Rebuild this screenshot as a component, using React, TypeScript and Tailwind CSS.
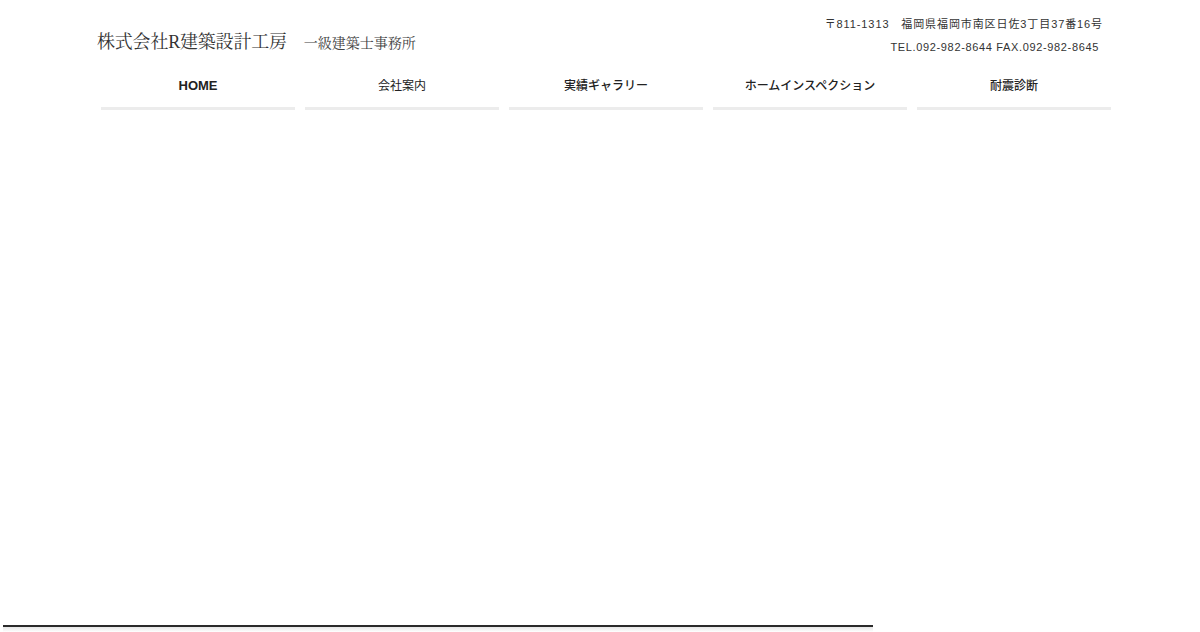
const navItems = [
  { label: "HOME", weight: "font-bold text-[13px]" },
  { label: "会社案内", weight: "font-normal text-[12px]" },
  { label: "実績ギャラリー", weight: "font-medium text-[12px]" },
  { label: "ホームインスペクション", weight: "font-medium text-[12px]" },
  { label: "耐震診断", weight: "font-medium text-[12px]" },
];

export default function App() {
  return (
    <div
      className="relative w-[1200px] h-[632px] bg-white overflow-hidden text-[#333]"
      style={{ fontFamily: '"Liberation Sans", Arial, "Noto Sans CJK JP", sans-serif' }}
    >
      <header className="w-[1020px] ml-[97px]">
        <div className="flex justify-between items-start">
          <div className="flex items-end mt-[30px] gap-[17px]">
            <h1
              className="text-[18px] leading-[24px] tracking-[-0.2px] text-[#333]"
              style={{ fontFamily: '"Liberation Serif", "Noto Serif CJK JP", "Noto Sans CJK JP", serif' }}
            >
              株式会社R建築設計工房
            </h1>
            <span
              className="text-[14px] leading-[20px] tracking-[0px] text-[#444]"
              style={{ fontFamily: '"Liberation Serif", "Noto Serif CJK JP", "Noto Sans CJK JP", serif' }}
            >
              一級建築士事務所
            </span>
          </div>
          <div className="text-right text-[11px] leading-[23px] mt-[13px] mr-[14px] tracking-[0.9px] text-[#333]">
            <p>〒811-1313　福岡県福岡市南区日佐3丁目37番16号</p>
            <p className="mr-[4px] tracking-[0.65px]">TEL.092-982-8644 FAX.092-982-8645</p>
          </div>
        </div>
        <nav className="flex gap-[10px] mt-[9px] ml-[4px]">
          {navItems.map((item) => (
            <a
              key={item.label}
              href="#"
              className={`w-[194px] shrink-0 h-[42px] pb-[4px] flex items-center justify-center border-b-[3px] border-[#ececec] text-[#222] ${item.weight}`}
            >
              {item.label}
            </a>
          ))}
        </nav>
      </header>

      <div className="absolute left-[3px] top-[625px] w-[870px]">
        <div className="h-[2px] bg-[#2a2a2a]" />
        <div className="h-[5px] bg-gradient-to-b from-[#e6e6e6] to-white" />
      </div>
    </div>
  );
}
